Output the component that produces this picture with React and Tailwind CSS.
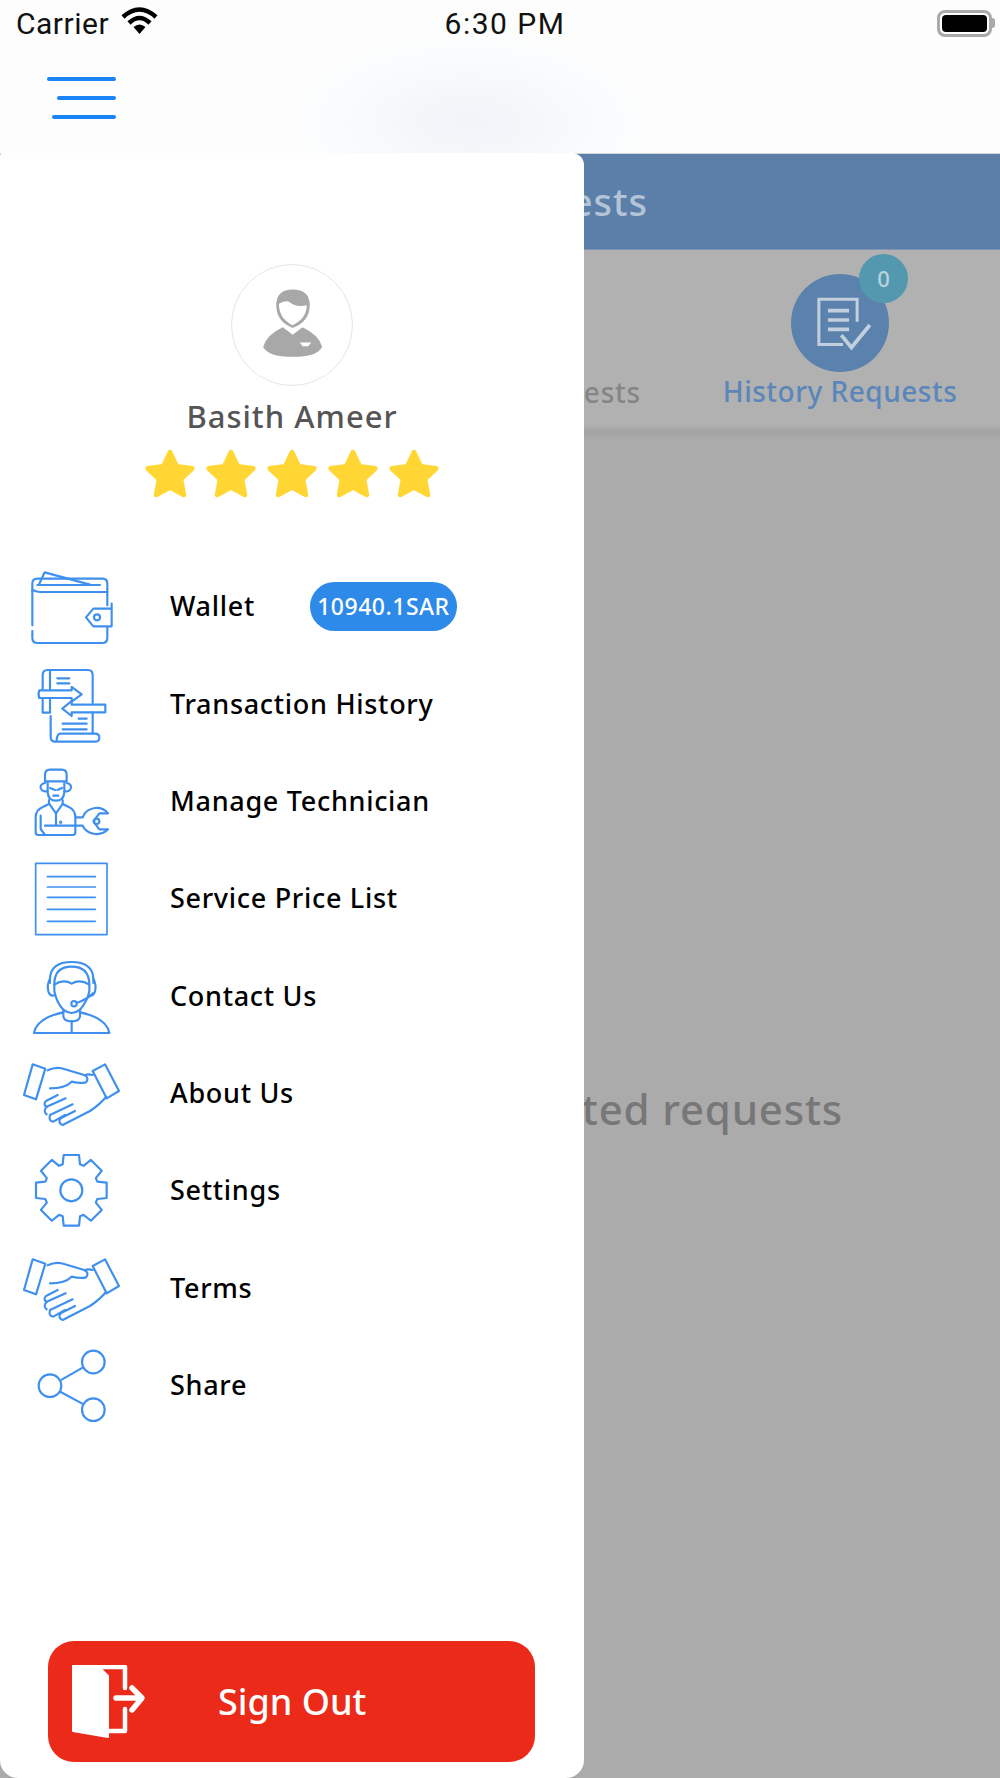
import React from "react";

const BLUE = "#3f90ee";

const gearPath = (cx, cy) => {
  const pts = [];
  for (let i = 0; i < 8; i++) {
    const a = (i * Math.PI) / 4 - Math.PI / 2;
    const at = (r, off) => [
      (cx + r * Math.cos(a) - off * Math.sin(a)).toFixed(1),
      (cy + r * Math.sin(a) + off * Math.cos(a)).toFixed(1),
    ];
    pts.push(at(78, -26), at(106, -23), at(106, 23), at(78, 26));
  }
  return "M" + pts.map((p) => p.join(" ")).join(" L") + " Z";
};

const RowIcon = ({ cy, width = 6.5, children }) => (
  <svg
    viewBox={`63 ${cy - 145} 300 290`}
    className="w-[100px] h-[96.67px] shrink-0"
    fill="none"
    stroke={BLUE}
    strokeWidth={width}
    strokeLinecap="round"
    strokeLinejoin="round"
  >
    {children}
  </svg>
);

const WalletIcon = () => (
  <RowIcon cy={168}>
    <path d="M97 120 V225 M97 242 V262 Q97 278 113 278 H306 Q322 278 322 262 V230" />
    <path d="M97 122 V100 Q97 85 112 85 H308 Q322 85 322 100 V165" />
    <path d="M100 120 Q110 125 120 125 H322" />
    <path d="M112 104 H300 M118 100 L134 66 L270 103" />
    <path d="M335 160 V228 H280 L258 201 L280 175 H335" />
    <circle cx="291" cy="201" r="9" />
  </RowIcon>
);

const TransactionIcon = () => (
  <RowIcon cy={460}>
    <path d="M128 416 V372 Q128 357 143 357 H264 Q278 357 278 372 V456" />
    <path d="M150 357 V416 M150 442 V485 H128 V442" />
    <path d="M172 382 H208 M172 397 H208" />
    <path d="M118 418 H215 V408 L245 430 L215 452 V441 H118 Q113 430 118 418 Z" />
    <path d="M316 461 H215 V450 L187 473 L215 495 V484 H316 Z" />
    <path d="M152 495 V558 Q152 572 166 572 H285 Q298 572 298 560 Q298 548 285 548 H180 Q170 550 170 572" />
    <path d="M278 484 V548" />
    <path d="M236 503 H260 M188 518 H260 M188 535 H260" />
  </RowIcon>
);

const TechnicianIcon = () => (
  <RowIcon cy={752}>
    <path d="M135 692 V672 Q135 657 150 657 H185 Q200 657 200 672 V692 Z" />
    <path d="M135 697 Q120 700 122 712 Q126 724 143 722 M200 697 Q215 700 213 712 Q209 724 193 722" />
    <path d="M143 697 V725 Q145 750 168 750 Q191 750 193 725 V697" />
    <path d="M150 712 L165 718 M186 712 L172 718 M160 735 H175" />
    <path d="M147 748 V760 L130 768 Q107 777 107 800 V845 Q107 853 115 853 H218 Q226 853 226 845 V800 Q226 777 205 768 L188 760 V748" />
    <path d="M148 760 L168 788 L188 760 M168 788 V825 M122 795 V835 L135 853 M135 825 H226" />
    <circle cx="182" cy="815" r="2" />
    <path d="M228 800 H248 Q256 776 285 772 Q310 770 324 788 L298 788 L280 812 L298 836 L324 836 Q310 852 285 850 Q256 846 248 825 H228" />
    <circle cx="290" cy="812" r="8" />
  </RowIcon>
);

const ListIcon = () => (
  <RowIcon cy={1044} width={5}>
    <rect x="107" y="939" width="214" height="214" />
    <path d="M142 979 H286 M142 1010 H286 M142 1041 H286 M142 1077 H286 M142 1113 H286" />
  </RowIcon>
);

const ContactIcon = () => (
  <RowIcon cy={165}>
    <path d="M150 125 V112 Q152 62 215 62 Q278 62 280 112 V125" />
    <path d="M163 125 Q165 76 215 76 Q265 76 268 125" />
    <path d="M150 112 Q140 130 145 150 Q150 166 163 162 M280 112 Q290 130 285 150 Q280 166 268 162" />
    <path d="M163 130 Q190 112 215 127 Q240 112 268 130" />
    <path d="M163 128 V150 Q170 185 190 205 Q215 225 240 205 Q262 180 268 150 V128" />
    <path d="M280 155 Q265 172 232 184" />
    <circle cx="222" cy="187" r="8" />
    <path d="M190 205 V225 Q192 240 215 240 Q238 240 240 225 V205" />
    <path d="M190 213 Q110 230 102 275 H328 Q320 230 240 213 M215 240 V275" />
  </RowIcon>
);

const HandshakeIcon = ({ cy }) => (
  <RowIcon cy={cy}>
    <g transform={`translate(0 ${cy - 457})`}>
      <path d="M98 370 L136 383 L108 475 L72 462 Z" />
      <path d="M278 390 L315 370 L357 450 L320 472 Z" />
      <path d="M143 388 Q170 375 195 385 L255 403 Q268 412 258 424 Q240 428 215 422 Q195 442 150 442" />
      <path d="M278 402 Q262 398 255 403" />
      <path d="M173 462 L138 480 Q128 490 140 498" />
      <path d="M197 472 L140 497 Q128 510 140 520" />
      <path d="M218 490 L150 522 Q145 540 160 542 L195 522" />
      <path d="M225 510 L182 532 Q172 545 188 552 L270 510 Q300 490 318 468" />
    </g>
  </RowIcon>
);

const GearIcon = () => (
  <RowIcon cy={752}>
    <path d={gearPath(214, 752)} />
    <circle cx="214" cy="752" r="33" />
  </RowIcon>
);

const ShareIcon = () => (
  <RowIcon cy={1335}>
    <circle cx="280" cy="1265" r="34" />
    <circle cx="150" cy="1336" r="34" />
    <circle cx="280" cy="1408" r="34" />
    <path d="M185 1318 L248 1282 M182 1355 L247 1390" />
  </RowIcon>
);

const menu = [
  { label: "Wallet", icon: <WalletIcon />, badge: "10940.1SAR" },
  { label: "Transaction History", icon: <TransactionIcon /> },
  { label: "Manage Technician", icon: <TechnicianIcon /> },
  { label: "Service Price List", icon: <ListIcon /> },
  { label: "Contact Us", icon: <ContactIcon /> },
  { label: "About Us", icon: <HandshakeIcon cy={457} /> },
  { label: "Settings", icon: <GearIcon /> },
  { label: "Terms", icon: <HandshakeIcon cy={1042} /> },
  { label: "Share", icon: <ShareIcon /> },
];

const Star = () => (
  <svg viewBox="0 0 24 24" className="w-[58px] h-[58px]" fill="#ffd633" stroke="#ffd633" strokeWidth="2" strokeLinejoin="round">
    <path d="M12 3 L14.8 8.9 21.2 9.7 16.5 14.2 17.7 20.6 12 17.5 6.3 20.6 7.5 14.2 2.8 9.7 9.2 8.9 Z" />
  </svg>
);

const StatusBar = () => (
  <div className="h-[46px] pl-[16px] pr-[5px] grid grid-cols-[1fr_auto_1fr] items-center text-[#111] font-['Roboto',sans-serif] text-[30px]">
    <div className="flex items-center gap-[12px] tracking-[0.5px]">
      <span>Carrier</span>
      <svg viewBox="0 0 37 27" className="w-[37px] h-[27px] -mt-[5px]" fill="none" stroke="#000">
        <path d="M2 10 Q18.5 -5 35 10" strokeWidth="4.5" />
        <path d="M8 16 Q18.5 6 29 16" strokeWidth="4.5" />
        <path d="M12.5 20 Q18.5 15 24.5 20 L18.5 27 Z" fill="#000" stroke="none" />
      </svg>
    </div>
    <div className="pr-[1px] tracking-[1.5px]">6:30 PM</div>
    <div className="flex justify-end items-center">
      <div className="w-[55px] h-[27px] rounded-[8px] border-[3px] border-[#a9a9a9] p-[2px]">
        <div className="w-full h-full rounded-[4px] bg-black" />
      </div>
      <div className="w-[3px] h-[10px] rounded-r-sm bg-[#a9a9a9]" />
    </div>
  </div>
);

const App = () => {
  return (
    <div className="relative w-[1000px] h-[1778px] overflow-hidden bg-[#ababab] font-['Noto_Sans',sans-serif]">
      {/* Nav bar */}
      <div className="h-[154px] border-b border-[#d6d6d6] bg-[radial-gradient(ellipse_22%_70%_at_47%_80%,#f0f4f8_0%,#fbfcfd_70%,#fdfdfd_100%)]">
        <StatusBar />
        <div className="w-[69px] ml-[47px] mt-[31px] flex flex-col items-end gap-[15px]">
          <div className="h-[4px] w-[69px] rounded-full bg-[#1a84f5]" />
          <div className="h-[4px] w-[59px] rounded-full bg-[#1a84f5]" />
          <div className="h-[4px] w-[64px] rounded-full bg-[#1a84f5]" />
        </div>
      </div>

      {/* Page behind the drawer */}
      <div className="h-[96px] bg-[#5b7fa9] border-b border-[#7f97b5] flex items-center">
        <div className="w-[648px] text-right text-[38px] tracking-[1px] font-medium text-[#b4c3d6]">Requests</div>
      </div>
      <div className="h-[190px] bg-[linear-gradient(#b1b1b1_92%,#a4a4a4_95%,#a5a5a5_97%,#ababab_100%)] flex items-start">
        <div className="w-[641px] mt-[124px] text-right text-[28px] leading-[36px] tracking-[0.8px] font-medium text-[#858585]">Requests</div>
        <div className="ml-[82px] w-[234px] flex flex-col items-center pt-[24px]">
          <div className="relative w-[98px] h-[98px] rounded-full bg-[#5b81ad]">
            <svg viewBox="275 103 292 292" className="w-[98px] h-[98px]" fill="none" stroke="#c3cfdd" strokeWidth="9">
              <path d="M430 313 H358 V178 H472 V245" />
              <path d="M385 212 H448 M385 240 H448 M385 268 H448" strokeWidth="11" />
              <path d="M425 285 L455 322 L510 255" strokeWidth="11" />
            </svg>
            <div className="absolute left-[68px] -top-[20px] w-[49px] h-[49px] rounded-full bg-[#5498b0] flex items-center justify-center text-[22px] font-medium text-[#b9d3dc]">
              0
            </div>
          </div>
          <div className="mt-[1px] text-[28px] leading-[36px] tracking-[0.5px] font-medium text-[#5b86ba] whitespace-nowrap">History Requests</div>
        </div>
      </div>
      <div className="w-[843px] mt-[644px] text-right text-[42px] leading-[50px] tracking-[0.8px] font-medium text-[#777]">No completed requests</div>

      {/* Drawer */}
      <div className="absolute left-0 top-[153px] bottom-0 w-[584px] bg-white rounded-tl-[3px] rounded-tr-[12px] rounded-b-[18px] flex flex-col items-stretch">
        <div className="mt-[111px] self-center w-[122px] h-[122px] rounded-full border border-[#e6e6e6] overflow-hidden">
          <svg viewBox="30 42 366 366" className="w-full h-full">
            <path d="M125 292 Q135 255 185 232 L215 255 L245 232 Q295 255 305 292 Q290 322 215 322 Q140 322 125 292 Z" fill="#a8a8a8" />
            <path d="M165 165 Q165 117 215 117 Q267 117 267 165 Q267 215 215 234 Q165 215 165 165 Z" fill="#a8a8a8" />
            <path d="M173 160 Q195 148 205 155 Q225 172 258 165 Q258 205 215 226 Q173 205 173 160 Z" fill="#fff" />
            <path d="M237 278 H272 L262 290 H245 Z" fill="#fff" />
          </svg>
        </div>
        <div className="mt-[12px] text-center text-[31px] leading-[36px] tracking-[1px] font-medium text-[#555]">Basith Ameer</div>
        <div className="mt-[11px] flex justify-center gap-[3px]">
          {[0, 1, 2, 3, 4].map((i) => (
            <Star key={i} />
          ))}
        </div>

        <div className="mt-[55px] flex flex-col">
          {menu.map((item) => (
            <div key={item.label} className="h-[97.33px] flex items-center pl-[21px]">
              {item.icon}
              <span className="ml-[49px] text-[27px] tracking-[0.7px] font-medium text-black whitespace-nowrap">{item.label}</span>
              {item.badge && (
                <span className="ml-[55px] w-[147px] h-[49px] rounded-full bg-[#2d8ae8] flex items-center justify-center text-[23px] tracking-[0.5px] font-medium text-white">
                  {item.badge}
                </span>
              )}
            </div>
          ))}
        </div>

        <div className="mt-auto mb-[16px] ml-[48px] w-[487px] h-[121px] rounded-[26px] bg-[#ec2a1a] flex items-center pl-[24px]">
          <svg viewBox="0 0 74 74" className="w-[74px] h-[74px] shrink-0" fill="none" stroke="#fff" strokeWidth="4.5" strokeLinecap="round" strokeLinejoin="round">
            <path d="M1 1 H26 L36 11 V72 L1 66 Z" fill="#fff" strokeWidth="2" />
            <path d="M24 2 H53 V23 M53 44 V66 H36" />
            <path d="M44 33 H69 M60 23 L70 33 L60 45" strokeWidth="5.5" />
          </svg>
          <span className="ml-[72px] text-[36px] font-medium text-white">Sign Out</span>
        </div>
      </div>
    </div>
  );
};

export default App;
